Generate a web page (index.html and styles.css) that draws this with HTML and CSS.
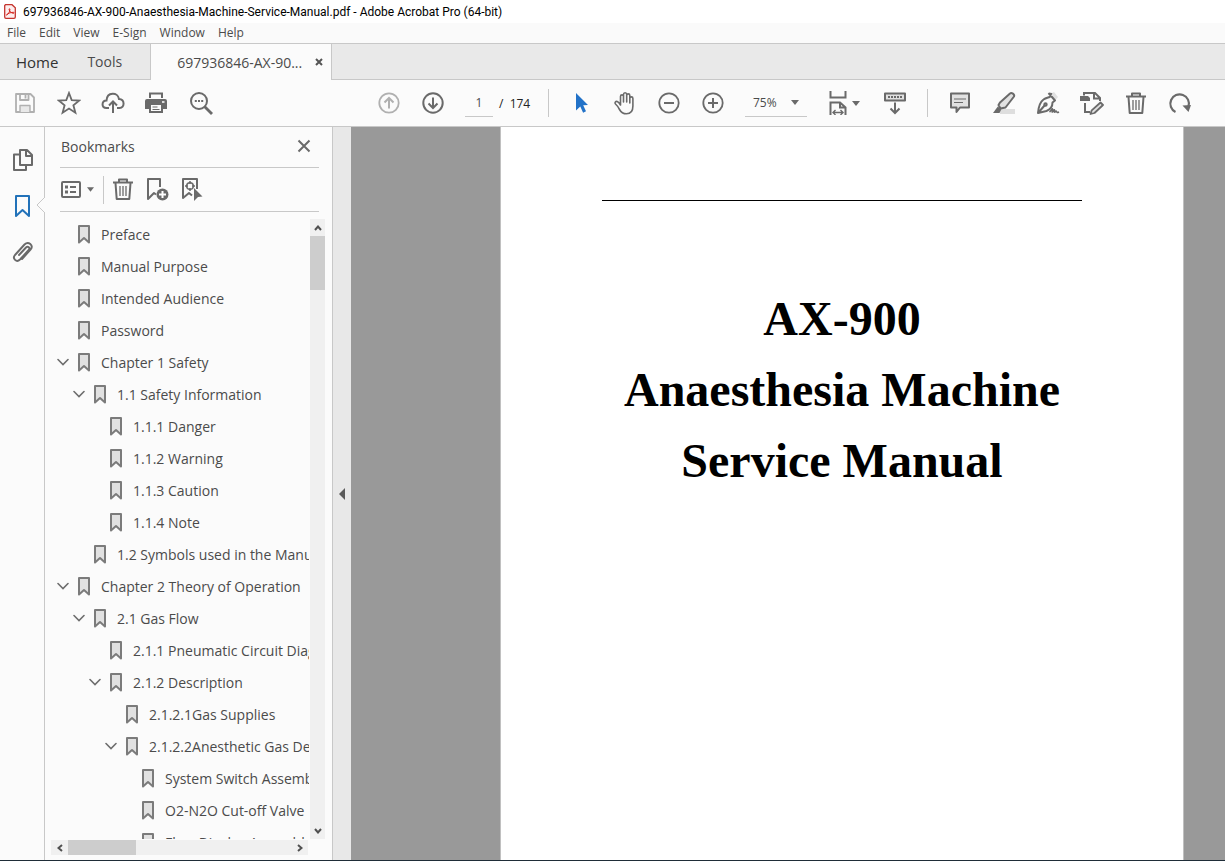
FILE: index.html
```html
<!DOCTYPE html>
<html lang="en">
<head>
    <meta charset="UTF-8">
    <meta name="viewport" content="width=device-width, initial-scale=1.0">
    <title>697936846-AX-900-Anaesthesia-Machine-Service-Manual.pdf - Adobe Acrobat Pro (64-bit)</title>
    <link rel="stylesheet" href="styles.css">
</head>
<body>
    <!-- Shared icons -->
    <svg class="defs" width="0" height="0" aria-hidden="true">
        <symbol id="bookmark" viewBox="0 0 12 19">
            <path d="M1 1h10v16.500l-5-4.500-5 4.500z" fill="#e1e1e1" stroke="#7b7b7b" stroke-width="2" stroke-linejoin="round"/>
        </symbol>
        <symbol id="chevron" viewBox="0 0 12 8">
            <path d="M1 1.500l5 5 5-5" fill="none" stroke="#6e6e6e" stroke-width="1.600" stroke-linecap="round"/>
        </symbol>
        <symbol id="trash" viewBox="0 0 24 24">
            <path d="M2 5.500h20M8 5V2.500h8V5M4.500 6l1.200 16h12.600l1.200-16" fill="none" stroke="#6a6a6a" stroke-width="2" stroke-linejoin="round"/>
            <path d="M9 9v10M12 9v10M15 9v10" stroke="#6a6a6a" stroke-width="1.300"/>
        </symbol>
        <symbol id="arrow-down" viewBox="0 0 8 5">
            <path d="M0 0h8L4 5z" fill="#6a6a6a"/>
        </symbol>
    </svg>

    <header class="titlebar">
        <svg class="app-icon" viewBox="0 0 12 15">
            <path d="M1.500.7h6.500l3.300 3.200v9.100a1.300 1.300 0 0 1-1.300 1.300H2A1.300 1.300 0 0 1 .7 13V1.500z" fill="#fdeeee" stroke="#c5342e" stroke-width="1.300"/>
            <path d="M2.400 11c1.800-.6 3.500-3.200 3.500-5.700 0-.8-.9-.7-.8 0 .3 2.300 2.200 3.900 4.500 4 .8 0 .7-1-.2-1-2.500 0-5 .8-7 2.700z" fill="none" stroke="#d5241d" stroke-width="1"/>
        </svg>
        <h1>697936846-AX-900-Anaesthesia-Machine-Service-Manual.pdf - Adobe Acrobat Pro (64-bit)</h1>
    </header>

    <nav class="menubar">
        <button type="button">File</button>
        <button type="button">Edit</button>
        <button type="button">View</button>
        <button type="button">E-Sign</button>
        <button type="button">Window</button>
        <button type="button">Help</button>
    </nav>

    <div class="tabs">
        <button type="button" class="tab home">Home</button>
        <button type="button" class="tab tools">Tools</button>
        <div class="tab-active">
            <button type="button" class="tab">697936846-AX-90...</button>
            <button type="button" class="tab-close" aria-label="Close tab">
                <svg width="8" height="8" viewBox="0 0 8 8"><path d="M1 1l6 6M7 1L1 7" stroke="#555" stroke-width="2"/></svg>
            </button>
        </div>
    </div>

    <div class="toolbar">
        <div class="tool-group">
            <button type="button" class="tool" aria-label="Save">
                <svg viewBox="0 0 24 24" fill="none" stroke="#b0b0b0" stroke-width="1.800" stroke-linejoin="round">
                    <path d="M3 3h14.500L21 6.500V21H3z"/><path d="M7 3v6h8.500V3M12.500 4v3.500"/><path d="M7 21v-6.500h10V21" fill="#e8e8e8" stroke-width="1.400"/>
                </svg>
            </button>
            <button type="button" class="tool" aria-label="Add to starred">
                <svg viewBox="0 0 24 24" fill="none" stroke="#6a6a6a" stroke-width="1.800"><path d="M12 2l2.700 7.100 7.600.4-5.900 4.800 2 7.400L12 17.500l-6.400 4.200 2-7.400-5.900-4.800 7.600-.4z"/></svg>
            </button>
            <button type="button" class="tool" aria-label="Upload">
                <svg viewBox="0 0 24 24" fill="none" stroke="#6a6a6a" stroke-width="2"><path d="M8 17H5.500C0 16.800.5 9.700 5.500 9.500 6 .5 17 .8 18 8c6 .3 6 8.700.5 9H16M12 22V11M8 14.500l4-4 4 4"/></svg>
            </button>
            <button type="button" class="tool" aria-label="Print">
                <svg viewBox="1 0 24 24"><path d="M5 1.500h14V7H5z" fill="#6a6a6a"/><path d="M7 3.500h10V7H7z" fill="#fbfbfb"/><path d="M3 8h18a2 2 0 0 1 2 2v8h-4v4H5v-4H1v-8a2 2 0 0 1 2-2z" fill="#6a6a6a"/><path d="M7 14h10v6H7z" fill="#fbfbfb"/><path d="M8.500 16h5M8.500 18.500h7" stroke="#6a6a6a" stroke-width="1.200"/><path d="M18 11h2.500" stroke="#fbfbfb" stroke-width="1.600"/></svg>
            </button>
            <button type="button" class="tool" aria-label="Find text">
                <svg viewBox="0 0 24 24" fill="none" stroke="#6a6a6a"><circle cx="10" cy="10" r="8" stroke-width="2"/><path d="M15.500 15.500l7.500 7.500" stroke-width="2.800"/><path d="M5.800 10h8.500" stroke-width="1.800" stroke-dasharray="2 1.200"/></svg>
            </button>
        </div>

        <div class="tool-group tools-main">
            <button type="button" class="tool" aria-label="Previous page">
                <svg viewBox="0 0 24 24" fill="none" stroke="#b0b0b0" stroke-width="1.800"><circle cx="12" cy="12" r="9.700"/><path d="M12 17.500V7M7.500 11.500L12 7l4.500 4.500" stroke-width="2"/></svg>
            </button>
            <button type="button" class="tool" aria-label="Next page">
                <svg viewBox="0 0 24 24" fill="none" stroke="#6a6a6a" stroke-width="2"><circle cx="12" cy="12" r="9.700"/><path d="M12 6.500V17M7.500 12.500L12 17l4.500-4.500" stroke-width="2"/></svg>
            </button>
            <input class="page-input" type="text" value="1" aria-label="Page number">
            <span class="page-total">/&nbsp; 174</span>
            <span class="separator"></span>
            <button type="button" class="tool" aria-label="Select">
                <svg viewBox="0 0 24 24"><path d="M7 2l12 12-4.800.3 2.800 6-2.900 1.400-2.800-6.200L7 19.500z" fill="#2272c8"/></svg>
            </button>
            <button type="button" class="tool" aria-label="Pan">
                <svg viewBox="0 0 24 24" fill="none" stroke="#6a6a6a" stroke-width="1.600" stroke-linecap="round" stroke-linejoin="round"><path d="M7.500 14V5.500c0-2.200 3-2.200 3 0V11 3.500c0-2.300 3.200-2.300 3.200 0V11 4.500c0-2.200 3.100-2.200 3.100 0V12 7.500c0-2.200 3.100-2.200 3.100 0v7.500c0 5-2.400 7.800-6.400 7.800-3.800 0-5.400-1.300-7-4.300-1.200-2.200-2.200-4-4-5.500-1.300-1.400.2-3.200 2.200-2.300 1.200.5 2 1.800 2.800 3.300z"/></svg>
            </button>
            <button type="button" class="tool" aria-label="Zoom out">
                <svg viewBox="0 0 24 24" fill="none" stroke="#6a6a6a" stroke-width="1.800"><circle cx="12" cy="12" r="9.700"/><path d="M7 12h10" stroke-width="2"/></svg>
            </button>
            <button type="button" class="tool" aria-label="Zoom in">
                <svg viewBox="0 0 24 24" fill="none" stroke="#6a6a6a" stroke-width="1.800"><circle cx="12" cy="12" r="9.700"/><path d="M7 12h10M12 7v10" stroke-width="2"/></svg>
            </button>
            <div class="zoom-box">
                <select aria-label="Zoom level">
                    <option>50%</option>
                    <option selected>75%</option>
                    <option>100%</option>
                </select>
                <svg class="caret"><use href="#arrow-down"/></svg>
            </div>
            <button type="button" class="tool fit" aria-label="Fit width">
                <svg viewBox="0 0 18 24" class="fit-icon" fill="none" stroke="#6a6a6a" stroke-width="2"><path d="M1.500 0v6.500h15V0M1.500 24V11.500h9.500l5.500 5V24M11 11.500v5h5.500"/><path d="M4 21.500h10M6.500 19L4 21.500 6.500 24M11.500 19l2.500 2.500-2.500 2.500" stroke-width="1.400"/></svg>
                <svg class="caret"><use href="#arrow-down"/></svg>
            </button>
            <button type="button" class="tool" aria-label="Reading controls">
                <svg viewBox="0 0 24 24" fill="none" stroke="#6a6a6a" stroke-width="2"><path d="M2 2.500h20v7H2z" fill="#e1e1e1" stroke-linejoin="round"/><path d="M5 6h14" stroke-dasharray="2 1"/><path d="M12 11.500V22M7.500 17.500L12 22l4.500-4.500"/></svg>
            </button>
            <span class="separator"></span>
            <button type="button" class="tool" aria-label="Comment">
                <svg viewBox="0 0 24 24" fill="none" stroke="#6a6a6a" stroke-width="2" stroke-linejoin="round"><path d="M3 2.500h18v14h-9L8.500 21v-4.500H3z" fill="#e1e1e1"/><path d="M6 8h12M6 11.500h9" stroke-width="1.200"/></svg>
            </button>
            <button type="button" class="tool" aria-label="Highlight">
                <svg viewBox="0 0 24 24"><path d="M8 18h15v5H8z" fill="#dedede"/><path d="M18 2.500c1.500-1.500 5 .8 4 3l-8.500 11-5 1-2-3.500 1.500-2.500z" fill="#e1e1e1" stroke="#6a6a6a" stroke-width="2" stroke-linejoin="round"/><path d="M5.800 15.500l3.500 3-1.800 3.500H1z" fill="#6a6a6a"/></svg>
            </button>
            <button type="button" class="tool" aria-label="Sign">
                <svg viewBox="0 0 24 24" fill="none" stroke="#6a6a6a" stroke-width="2" stroke-linejoin="round"><path d="M14 3l4-2 4 5-3 3.500z" fill="#e1e1e1" stroke="none"/><path d="M12.500 2l6.500 7.500-2.500 2c0 5-3.500 7.500-6 8.500L2 22c.5-6 2-11 5.500-13.500 2-1.500 5-2 6-2.500L15.500 2M2 22l7-8"/><circle cx="9.500" cy="13.500" r="1.200"/><path d="M13.500 21c2-1.500 2.500-4 3-3s-1 3.500 0 3 1.500-3 2-2-.5 2.500.5 2 1-1.500 1.500-.5.500 1.500 2.500.5" stroke-width="1.600"/></svg>
            </button>
            <button type="button" class="tool" aria-label="Edit page">
                <svg viewBox="0 0 24 24" fill="none" stroke="#6a6a6a" stroke-width="2"><path d="M4 4.500V2h11l5 5v3M14 2v5.500h6M5 12v9h5"/><path d="M0 5h8l2 2v3H0z" fill="#6a6a6a" stroke="none"/><path d="M20.500 11.500l2.500 2.500-8.500 8-4 1 1.200-3.700z" fill="#e1e1e1" stroke-width="1.800" stroke-linejoin="round"/></svg>
            </button>
            <button type="button" class="tool" aria-label="Delete pages">
                <svg><use href="#trash"/></svg>
            </button>
            <button type="button" class="tool" aria-label="Rotate">
                <svg viewBox="0 0 24 24"><path d="M7.500 21A9.300 9.300 0 1 1 20.500 15.500" fill="none" stroke="#6a6a6a" stroke-width="2.200"/><path d="M14.500 14.500l8.500-.5-2.500 7z" fill="#6a6a6a"/></svg>
            </button>
        </div>
    </div>

    <main class="workspace">
        <aside class="rail">
            <button type="button" class="rail-button" aria-label="Page thumbnails">
                <svg viewBox="0 0 24 24" fill="none" stroke="#6a6a6a" stroke-width="2" stroke-linejoin="round"><path d="M9 2h7l5 5v10H9zM15 2v6h6M8 6.500H3V22h12v-4"/></svg>
            </button>
            <button type="button" class="rail-button selected" aria-label="Bookmarks">
                <svg viewBox="0 0 24 24" fill="none" stroke="#2272b9" stroke-width="2" stroke-linejoin="round"><path d="M5 2h13v20l-6.500-6L5 22z"/></svg>
            </button>
            <button type="button" class="rail-button" aria-label="Attachments">
                <svg viewBox="0 0 24 24" fill="none" stroke="#6a6a6a" stroke-width="1.900" stroke-linecap="round"><path d="M8 15l7-7.500c2-2 4.500.5 2.700 2.500L9 19.500c-3.500 3.500-8-1-5-4.500L13.500 4.500c4-4 9.500 1 6 5.200L11 19"/></svg>
            </button>
            <svg class="notch" viewBox="0 0 9 16"><path d="M9 0L1 8l8 8" fill="#fbfbfb" stroke="#c8c8c8"/></svg>
        </aside>

        <section class="panel">
            <div class="panel-head">
                <h2>Bookmarks</h2>
                <button type="button" class="panel-close" aria-label="Close panel">
                    <svg width="14" height="14" viewBox="0 0 14 14"><path d="M1.500 1.500l11 11M12.500 1.500l-11 11" stroke="#6a6a6a" stroke-width="2"/></svg>
                </button>
            </div>
            <div class="panel-tools">
                <button type="button" class="options" aria-label="Options">
                    <svg width="20" height="17" viewBox="0 0 20 17" fill="none" stroke="#6a6a6a" stroke-width="2"><rect x="1" y="1" width="18" height="15" rx="1"/><path d="M4 6h3M4 11h3" stroke-width="3"/><path d="M9 6h6M9 11h6"/></svg>
                    <svg class="caret small"><use href="#arrow-down"/></svg>
                </button>
                <button type="button" class="panel-tool" aria-label="Delete bookmark"><svg><use href="#trash"/></svg></button>
                <button type="button" class="panel-tool" aria-label="New bookmark">
                    <svg viewBox="0 0 24 24"><path d="M15 10V2H3v20l6-6 2 1.500" fill="none" stroke="#6a6a6a" stroke-width="2" stroke-linejoin="round"/><circle cx="17.500" cy="17.500" r="6" fill="#6a6a6a"/><path d="M14 17.500h7M17.500 14v7" stroke="#fff" stroke-width="2"/></svg>
                </button>
                <button type="button" class="panel-tool" aria-label="Find current bookmark">
                    <svg viewBox="0 0 24 24"><path d="M18 12V2H4v19l6-5 3 2.500" fill="none" stroke="#6a6a6a" stroke-width="2" stroke-linejoin="round"/><circle cx="11" cy="9" r="3.300" fill="none" stroke="#6a6a6a" stroke-width="1.500"/><path d="M11 4v3M11 11v3M6 9h3M13 9h3" stroke="#6a6a6a" stroke-width="1.500"/><path d="M15 11l8.500 8.500-4.500.5-4 4z" fill="#6a6a6a"/></svg>
                </button>
            </div>

            <div class="tree-area">
                <ul class="tree">
                    <li class="level-0"><span class="twist"></span><a href="#"><svg class="mark"><use href="#bookmark"/></svg>Preface</a></li>
                    <li class="level-0"><span class="twist"></span><a href="#"><svg class="mark"><use href="#bookmark"/></svg>Manual Purpose</a></li>
                    <li class="level-0"><span class="twist"></span><a href="#"><svg class="mark"><use href="#bookmark"/></svg>Intended Audience</a></li>
                    <li class="level-0"><span class="twist"></span><a href="#"><svg class="mark"><use href="#bookmark"/></svg>Password</a></li>
                    <li class="level-0"><button type="button" class="twist" aria-label="Collapse"><svg><use href="#chevron"/></svg></button><a href="#"><svg class="mark"><use href="#bookmark"/></svg>Chapter 1 Safety</a></li>
                    <li class="level-1"><button type="button" class="twist" aria-label="Collapse"><svg><use href="#chevron"/></svg></button><a href="#"><svg class="mark"><use href="#bookmark"/></svg>1.1 Safety Information</a></li>
                    <li class="level-2"><span class="twist"></span><a href="#"><svg class="mark"><use href="#bookmark"/></svg>1.1.1 Danger</a></li>
                    <li class="level-2"><span class="twist"></span><a href="#"><svg class="mark"><use href="#bookmark"/></svg>1.1.2 Warning</a></li>
                    <li class="level-2"><span class="twist"></span><a href="#"><svg class="mark"><use href="#bookmark"/></svg>1.1.3 Caution</a></li>
                    <li class="level-2"><span class="twist"></span><a href="#"><svg class="mark"><use href="#bookmark"/></svg>1.1.4 Note</a></li>
                    <li class="level-1"><span class="twist"></span><a href="#"><svg class="mark"><use href="#bookmark"/></svg>1.2 Symbols used in the Manual</a></li>
                    <li class="level-0"><button type="button" class="twist" aria-label="Collapse"><svg><use href="#chevron"/></svg></button><a href="#"><svg class="mark"><use href="#bookmark"/></svg>Chapter 2 Theory of Operation</a></li>
                    <li class="level-1"><button type="button" class="twist" aria-label="Collapse"><svg><use href="#chevron"/></svg></button><a href="#"><svg class="mark"><use href="#bookmark"/></svg>2.1 Gas Flow</a></li>
                    <li class="level-2"><span class="twist"></span><a href="#"><svg class="mark"><use href="#bookmark"/></svg>2.1.1 Pneumatic Circuit Diagram</a></li>
                    <li class="level-2"><button type="button" class="twist" aria-label="Collapse"><svg><use href="#chevron"/></svg></button><a href="#"><svg class="mark"><use href="#bookmark"/></svg>2.1.2 Description</a></li>
                    <li class="level-3"><span class="twist"></span><a href="#"><svg class="mark"><use href="#bookmark"/></svg>2.1.2.1Gas Supplies</a></li>
                    <li class="level-3"><button type="button" class="twist" aria-label="Collapse"><svg><use href="#chevron"/></svg></button><a href="#"><svg class="mark"><use href="#bookmark"/></svg>2.1.2.2Anesthetic Gas Delivery</a></li>
                    <li class="level-4"><span class="twist"></span><a href="#"><svg class="mark"><use href="#bookmark"/></svg>System Switch Assembly</a></li>
                    <li class="level-4"><span class="twist"></span><a href="#"><svg class="mark"><use href="#bookmark"/></svg>O2-N2O Cut-off Valve</a></li>
                    <li class="level-4"><span class="twist"></span><a href="#"><svg class="mark"><use href="#bookmark"/></svg>Flow Display Assembly</a></li>
                </ul>
                <div class="scroll-y">
                    <button type="button" aria-label="Scroll up"><svg width="8" height="6" viewBox="0 0 8 6"><path d="M1 5l3-3.500L7 5" fill="none" stroke="#505050" stroke-width="2"/></svg></button>
                    <span class="thumb-y"></span>
                    <button type="button" class="scroll-end" aria-label="Scroll down"><svg width="8" height="6" viewBox="0 0 8 6"><path d="M1 1l3 3.500L7 1" fill="none" stroke="#505050" stroke-width="2"/></svg></button>
                </div>
            </div>
            <div class="scroll-x">
                <button type="button" aria-label="Scroll left"><svg width="6" height="8" viewBox="0 0 6 8"><path d="M5 1L1.500 4 5 7" fill="none" stroke="#505050" stroke-width="2"/></svg></button>
                <span class="thumb-x"></span>
                <button type="button" class="scroll-end" aria-label="Scroll right"><svg width="6" height="8" viewBox="0 0 6 8"><path d="M1 1l3.500 3L1 7" fill="none" stroke="#505050" stroke-width="2"/></svg></button>
            </div>
        </section>

        <button type="button" class="splitter" aria-label="Collapse panel">
            <svg width="6" height="12" viewBox="0 0 6 12"><path d="M6 0v12L0 6z" fill="#5a5a5a"/></svg>
        </button>

        <div class="viewer">
            <article class="page">
                <hr>
                <p>AX-900</p>
                <p>Anaesthesia Machine</p>
                <p>Service Manual</p>
            </article>
        </div>
    </main>
</body>
</html>
```

FILE: styles.css
```css
* {
    margin: 0;
    padding: 0;
    box-sizing: border-box;
}

body {
    height: 100vh;
    display: flex;
    flex-direction: column;
    overflow: hidden;
    font-family: "Open Sans", "Noto Sans", sans-serif;
    color: #4b4b4b;
    background: #fbfbfb;
    border-bottom: 1px solid #1f2d38;
}

button {
    border: none;
    background: none;
    font: inherit;
    color: inherit;
    display: flex;
    align-items: center;
    justify-content: center;
}

.defs {
    position: absolute;
}

/* Title and menus */
.titlebar {
    height: 23px;
    flex: none;
    display: flex;
    align-items: center;
    gap: 7px;
    padding-left: 4px;
    background: #fff;
}

.app-icon {
    width: 12px;
    height: 15px;
}

h1 {
    font: 12px Roboto, "Open Sans", sans-serif;
    color: #000;
    white-space: nowrap;
}

.menubar {
    height: 20px;
    flex: none;
    display: flex;
    gap: 13px;
    padding: 0 0 2px 7px;
    font-size: 12px;
    background: #fafafa;
}

/* Tabs */
.tabs {
    height: 37px;
    flex: none;
    display: flex;
    background: #e9e9e9;
    border-top: 1px solid #c8c8c8;
    border-bottom: 1px solid #c8c8c8;
    font-size: 14px;
}

.home {
    padding: 0 15px 0 16px;
    font-size: 15px;
    color: #323232;
}

.tools {
    padding: 0 28px 0 14px;
}

.tab-active {
    display: flex;
    gap: 13px;
    padding: 0 8px 0 26px;
    margin-bottom: -1px;
    background: #fbfbfb;
    border-left: 1px solid #c8c8c8;
    border-right: 1px solid #c8c8c8;
}

/* Toolbar */
.toolbar {
    height: 47px;
    flex: none;
    display: flex;
    justify-content: space-between;
    padding: 0 23px 0 3px;
    border-bottom: 1px solid #c8c8c8;
}

.tool-group {
    display: flex;
    align-items: center;
}

.tool {
    width: 44px;
    height: 44px;
}

.tool svg {
    width: 24px;
    height: 24px;
}

.page-input {
    width: 28px;
    height: 28px;
    margin: 0 6px 0 10px;
    border: none;
    border-bottom: 1px solid #c8c8c8;
    background: none;
    font: 12px "Open Sans", sans-serif;
    color: #4b4b4b;
    text-align: center;
}

.page-total {
    width: 34px;
    font-size: 12px;
    color: #222;
    white-space: nowrap;
}

.separator {
    width: 1px;
    height: 28px;
    margin: 0 10px;
    background: #c8c8c8;
}

.page-total + .separator {
    margin-left: 15px;
}

.zoom-box {
    width: 62px;
    height: 28px;
    margin: 0 15px 0 10px;
    display: flex;
    align-items: center;
    border-bottom: 1px solid #c8c8c8;
}

.zoom-box select {
    flex: 1;
    min-width: 0;
    height: 26px;
    padding-left: 8px;
    appearance: none;
    border: none;
    background: none;
    font: 12px "Open Sans", sans-serif;
    color: #4b4b4b;
}

.caret,
.tool .caret {
    width: 8px;
    height: 5px;
    flex: none;
}

.zoom-box .caret {
    margin-right: 8px;
}

.fit {
    width: 45px;
    margin-right: 6px;
    gap: 5px;
}

.tool .fit-icon {
    width: 18px;
}

/* Work area */
.workspace {
    flex: 1;
    min-height: 0;
    display: flex;
}

.rail {
    position: relative;
    width: 45px;
    flex: none;
    padding-top: 10px;
    border-right: 1px solid #c8c8c8;
}

.rail-button {
    width: 45px;
    height: 46px;
}

.rail-button svg,
.panel-tool svg {
    width: 24px;
    height: 24px;
}

.notch {
    position: absolute;
    top: 70px;
    right: -1px;
    width: 9px;
    height: 16px;
}

.panel {
    width: 288px;
    flex: none;
    display: flex;
    flex-direction: column;
    padding: 0 7px 5px 6px;
    border-right: 1px solid #c8c8c8;
}

.panel-head {
    height: 41px;
    flex: none;
    display: flex;
    align-items: center;
    justify-content: space-between;
    margin: 0 6px 0 9px;
    padding: 0 8px 2px 1px;
    border-bottom: 1px solid #c8c8c8;
}

h2 {
    font-size: 14px;
    font-weight: 400;
}

.panel-tools {
    height: 44px;
    flex: none;
    display: flex;
    align-items: center;
    margin: 0 6px 0 9px;
    border-bottom: 1px solid #c8c8c8;
}

.options {
    height: 28px;
    gap: 6px;
    padding: 0 9px 0 1px;
    margin-right: 2px;
    border-right: 1px solid #c8c8c8;
}

.caret.small {
    width: 7px;
}

.panel-tool {
    width: 34px;
    height: 28px;
    padding-bottom: 1px;
}

.tree-area {
    flex: 1;
    min-height: 0;
    display: flex;
    padding-top: 7px;
}

.tree {
    flex: 1;
    min-width: 0;
    margin: -1px 1px 0 0;
    overflow: hidden;
    list-style: none;
    font-size: 14px;
}

.tree li {
    height: 32px;
    display: flex;
    align-items: center;
    white-space: nowrap;
}

.tree a {
    display: flex;
    align-items: center;
    gap: 11px;
    color: inherit;
    text-decoration: none;
}

.twist {
    width: 12px;
    height: 16px;
    margin-right: 9px;
    flex: none;
}

.twist svg {
    width: 12px;
    height: 8px;
}

.mark {
    width: 12px;
    height: 19px;
    flex: none;
}

.level-0 {
    padding-left: 6px;
}

.level-1 {
    padding-left: 22px;
}

.level-2 {
    padding-left: 38px;
}

.level-3 {
    padding-left: 54px;
}

.level-4 {
    padding-left: 70px;
}

.scroll-y {
    width: 15px;
    display: flex;
    flex-direction: column;
    background: #f0f0f0;
}

.scroll-x {
    height: 15px;
    flex: none;
    display: flex;
    margin: 1px 17px 0 0;
    background: #f0f0f0;
}

.scroll-y button,
.scroll-x button {
    width: 17px;
    height: 17px;
    align-self: center;
}

.scroll-y .scroll-end {
    margin-top: auto;
}

.scroll-x .scroll-end {
    margin-left: auto;
}

.thumb-y {
    height: 54px;
    background: #cdcdcd;
}

.thumb-x {
    width: 68px;
    background: #cdcdcd;
}

.splitter {
    width: 18px;
    flex: none;
    background: #e8e8e8;
}

/* Document */
.viewer {
    flex: 1;
    min-width: 0;
    display: flex;
    padding: 0 41px 0 149px;
    background: #999;
}

.page {
    flex: 1;
    padding: 73px 101px 0;
    background: #fff;
    border-left: 1px solid #c0c0c0;
    border-right: 1px solid #c0c0c0;
    font: bold 48px/71px "Liberation Serif", "Times New Roman", serif;
    color: #000;
    text-align: center;
}

.page hr {
    border: none;
    border-top: 1px solid #000;
    margin-bottom: 82px;
}

.page p {
    white-space: nowrap;
}
```
